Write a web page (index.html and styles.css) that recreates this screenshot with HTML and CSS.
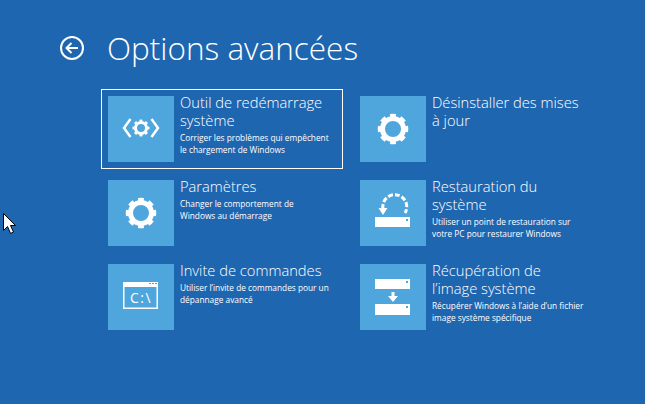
FILE: index.html
```html
<!DOCTYPE html>
<html lang="fr">
<head>
    <meta charset="UTF-8">
    <title>Options avancées</title>
    <link rel="stylesheet" href="styles.css">
</head>
<body>
    <svg class="cursor" width="16" height="24" viewBox="0 0 16 24">
        <path d="M2.5 1.5V18.5L6.5 14.5L9.5 21.5L12.5 20L9.5 13.5H14.5Z" fill="#fff" stroke="#000" stroke-width="1"/>
    </svg>

    <header class="page-header">
        <svg class="back-icon" width="26" height="26" viewBox="0 0 26 26">
            <circle cx="13" cy="13" r="11" fill="none" stroke="#fff" stroke-width="2"/>
            <path d="M19 13H8M12.5 8L7.5 13L12.5 18" fill="none" stroke="#fff" stroke-width="2"/>
        </svg>
        <h1 class="page-title">Options avancées</h1>
    </header>

    <main class="options">
        <div class="option option-focus">
            <div class="tile">
                <svg width="66" height="66" viewBox="0 0 66 66">
                    <circle class="gear-ring" cx="33" cy="32" r="5.5" stroke-width="3"/>
                    <circle class="gear-teeth" cx="33" cy="32" r="7.5" stroke-width="2" pathLength="80" stroke-dasharray="5 5" stroke-dashoffset="2.5"/>
                    <path d="M22.5 23L16 32L22.5 41M43.5 23L50 32L43.5 41" fill="none" stroke="#fff" stroke-width="2.5"/>
                </svg>
            </div>
            <div class="option-text">
                <h2>Outil de redémarrage système</h2>
                <p>Corriger les problèmes qui empêchent le chargement de Windows</p>
            </div>
        </div>

        <div class="option">
            <div class="tile">
                <svg width="66" height="66" viewBox="0 0 66 66">
                    <circle class="gear-ring" cx="33" cy="33" r="10.5" stroke-width="5"/>
                    <circle class="gear-teeth" cx="33" cy="33" r="13.5" stroke-width="3.5" pathLength="80" stroke-dasharray="5.4 4.6" stroke-dashoffset="2.7"/>
                </svg>
            </div>
            <div class="option-text">
                <h2>Désinstaller des mises à jour</h2>
            </div>
        </div>

        <div class="option">
            <div class="tile">
                <svg width="66" height="66" viewBox="0 0 66 66">
                    <circle class="gear-ring" cx="33" cy="33" r="10.5" stroke-width="5"/>
                    <circle class="gear-teeth" cx="33" cy="33" r="13.5" stroke-width="3.5" pathLength="80" stroke-dasharray="5.4 4.6" stroke-dashoffset="2.7"/>
                </svg>
            </div>
            <div class="option-text">
                <h2>Paramètres</h2>
                <p>Changer le comportement de<br>Windows au démarrage</p>
            </div>
        </div>

        <div class="option">
            <div class="tile">
                <svg width="66" height="66" viewBox="0 0 66 66">
                    <path d="M23 29A12 12 0 1 1 45 33" fill="none" stroke="#fff" stroke-width="3" stroke-dasharray="5 2"/>
                    <path d="M18.5 28H27.5L23 35Z" fill="#fff"/>
                    <rect x="15" y="37" width="35" height="10" fill="#fff"/>
                    <rect x="46" y="39" width="2" height="2" fill="#4ea6dc"/>
                </svg>
            </div>
            <div class="option-text">
                <h2>Restauration du système</h2>
                <p>Utiliser un point de restauration sur votre PC pour restaurer Windows</p>
            </div>
        </div>

        <div class="option">
            <div class="tile">
                <svg width="66" height="66" viewBox="0 0 66 66">
                    <path d="M15 18H50V45H15ZM16.5 23V43.5H48.5V23Z" fill="#fff" fill-rule="evenodd"/>
                    <path d="M41 19.5H43M44 19.5H46M47 19.5H49" stroke="#4ea6dc" stroke-width="1"/>
                    <text class="cmd-text" x="33" y="39">C:\</text>
                </svg>
            </div>
            <div class="option-text">
                <h2>Invite de commandes</h2>
                <p>Utiliser l’invite de commandes pour un dépannage avancé</p>
            </div>
        </div>

        <div class="option">
            <div class="tile">
                <svg width="66" height="66" viewBox="0 0 66 66">
                    <rect x="15" y="15" width="35" height="10" fill="#fff"/>
                    <rect x="46" y="17" width="2" height="2" fill="#4ea6dc"/>
                    <path d="M31.5 28H34.5V32H38L33 38L28 32H31.5Z" fill="#fff"/>
                    <rect x="15" y="40" width="35" height="11" fill="#fff"/>
                    <rect x="46" y="42" width="2" height="2" fill="#4ea6dc"/>
                </svg>
            </div>
            <div class="option-text">
                <h2>Récupération de l’image système</h2>
                <p>Récupérer Windows à l’aide d’un fichier image système spécifique</p>
            </div>
        </div>
    </main>
</body>
</html>
```

FILE: styles.css
```css
html, body {
    height: 100%;
}

body {
    margin: 0;
    padding: 28px 0 0 59px;
    box-sizing: border-box;
    overflow: hidden;
    background-color: #1f66b1;
    color: white;
    font-family: 'Open Sans', 'Noto Sans', sans-serif;
}

.cursor {
    position: absolute;
    left: 1px;
    top: 212px;
}

.page-header {
    display: flex;
    align-items: center;
    gap: 22px;
    height: 40px;
    margin-bottom: 21px;
}

.back-icon {
    flex: none;
}

.page-title {
    margin: 0;
    font-size: 31.5px;
    font-weight: 300;
    line-height: 40px;
    white-space: nowrap;
}

.options {
    display: grid;
    grid-template-columns: 242px 242px;
    grid-auto-rows: 80px;
    column-gap: 10px;
    row-gap: 4px;
    margin-left: 42px;
}

.option {
    display: flex;
    gap: 6px;
    padding: 6px;
    border: 1px solid transparent;
}

.option-focus {
    border-color: white;
}

.tile {
    flex: none;
    width: 66px;
    height: 66px;
    background-color: #4ea6dc;
}

.tile svg {
    display: block;
}

.gear-ring,
.gear-teeth {
    fill: none;
    stroke: white;
}

.cmd-text {
    fill: white;
    font-family: 'Open Sans', sans-serif;
    font-size: 14px;
    letter-spacing: 1.5px;
    text-anchor: middle;
}

.option-text {
    min-width: 0;
}

.option-text h2 {
    margin: -3px 0 0;
    font-size: 14.7px;
    font-weight: 300;
    line-height: 18px;
}

.option-text p {
    margin: 3px 0 0;
    font-size: 8.3px;
    line-height: 12px;
}
```
